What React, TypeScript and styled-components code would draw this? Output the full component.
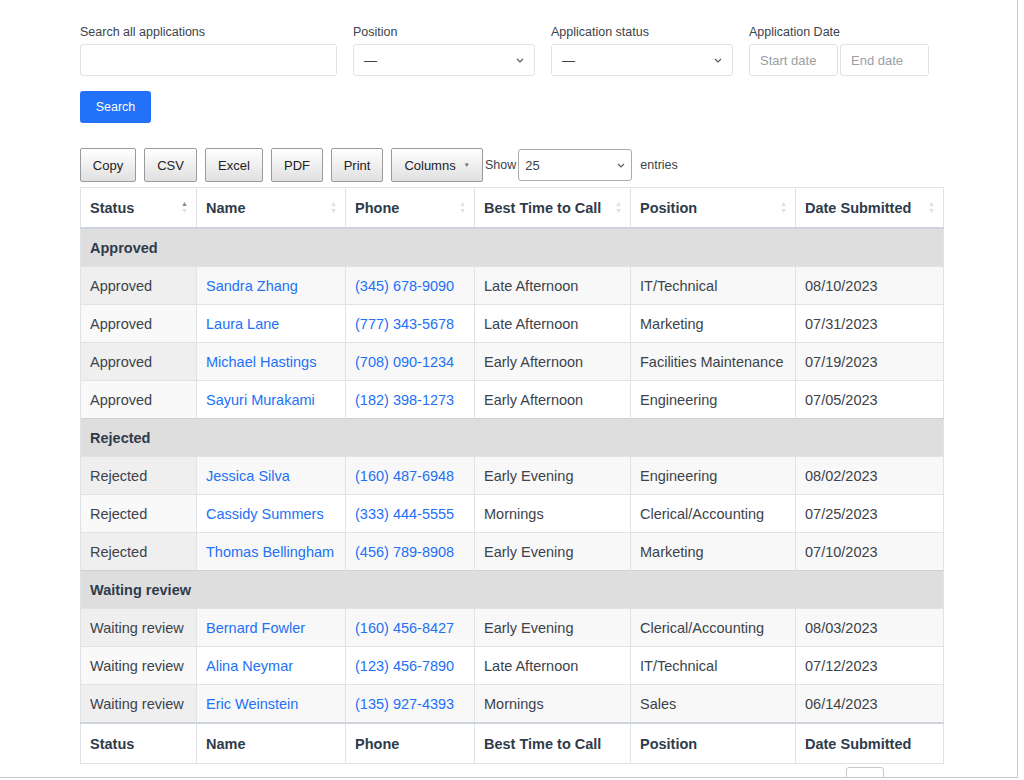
import { Fragment } from 'react';
import styled, { createGlobalStyle } from 'styled-components';

const Global = createGlobalStyle`
  body { margin: 0; background: #fff; font-family: "Liberation Sans", Arial, sans-serif; color: #3c434a; }
`;

const Frame = styled.div`
  width: 1018px;
  height: 778px;
  border-right: 1px solid #c9c9c9;
  border-bottom: 1px solid #c9c9c9;
  overflow: hidden;
  padding: 25px 0 0 80px;
  box-sizing: border-box;
  position: relative;
`;

const Filters = styled.div`
  display: flex;
  align-items: flex-end;
`;

const Field = styled.div<{ $w: number; $gap: number }>`
  width: ${(p) => p.$w}px;
  margin-right: ${(p) => p.$gap}px;
  display: flex;
  flex-direction: column;
`;

const Label = styled.label`
  font-size: 12.5px;
  color: #3c434a;
  margin-bottom: 5px;
`;

const Input = styled.div<{ $w?: number }>`
  height: 32px;
  ${(p) => (p.$w ? `width: ${p.$w}px;` : '')}
  border: 1px solid #dfe3e8;
  border-radius: 3px;
  box-sizing: border-box;
  display: flex;
  align-items: center;
  justify-content: space-between;
  padding: 0 10px;
  font-size: 13px;
  color: #3c434a;
`;

const Placeholder = styled.span`
  color: #9aa0a6;
`;

const DateRow = styled.div`
  display: flex;
  gap: 2px;
`;

const PrimaryBtn = styled.button`
  margin-top: 15px;
  width: 71px;
  height: 32px;
  background: #2271f6;
  border: none;
  border-radius: 3px;
  color: #fff;
  font: 12.5px "Liberation Sans", Arial, sans-serif;
`;

const Toolbar = styled.div`
  display: flex;
  align-items: center;
  gap: 8px;
  margin-top: 25px;
  font-size: 12.5px;
`;

const TbBtn = styled.button<{ $w: number }>`
  width: ${(p) => p.$w}px;
  height: 34px;
  border: 1px solid #9a9a9a;
  border-radius: 2px;
  background: linear-gradient(#fff, #e0e0e0);
  font: 13px "Liberation Sans", Arial, sans-serif;
  color: #222;
  display: flex;
  align-items: center;
  justify-content: center;
  gap: 8px;
`;

const Caret = styled.span`
  font-size: 6px;
  color: #666;
`;

const Select = styled.div`
  width: 114px;
  height: 32px;
  border: 1px solid #aaa;
  border-radius: 3px;
  box-sizing: border-box;
  display: flex;
  align-items: center;
  justify-content: space-between;
  padding: 0 6px;
  font-size: 13px;
  margin-left: -6px;
`;

const Table = styled.table`
  border-collapse: collapse;
  table-layout: fixed;
  margin-top: 5px;
  width: 864px;
  font-size: 14.5px;
  border: 1px solid #dfe3e8;
`;

const Th = styled.th<{ $w: number; $top?: boolean }>`
  width: ${(p) => p.$w}px;
  height: 39px;
  text-align: left;
  padding: 0 9px;
  font-weight: 700;
  color: #2f3b4a;
  white-space: nowrap;
  border-left: 1px solid #dfe3e8;
  border-bottom: ${(p) => (p.$top ? '2px solid #cfd4da' : 'none')};
  border-top: ${(p) => (p.$top ? 'none' : '2px solid #cfd4da')};
  position: relative;
`;

const Sort = styled.span<{ $active?: boolean }>`
  position: absolute;
  right: 8px;
  top: 13px;
  display: flex;
  flex-direction: column;
  gap: 1px;
  font-size: 7px;
  line-height: 6px;
  color: #dde1e5;
  & > span:first-child { color: ${(p) => (p.$active ? '#7d8794' : '#dde1e5')}; }
`;

const GroupRow = styled.tr`
  background: #dedede;
  td { height: 37px; padding: 0 9px; font-weight: 700; color: #2f3b4a; border-top: 1px solid #d0d0d0; }
`;

const Row = styled.tr<{ $odd: boolean }>`
  background: ${(p) => (p.$odd ? '#f8f8f8' : '#fff')};
`;

const Td = styled.td<{ $sorted?: boolean; $odd?: boolean }>`
  height: 37px;
  padding: 0 9px;
  border-left: 1px solid #dfe3e8;
  border-top: 1px solid #dfe3e8;
  white-space: nowrap;
  overflow: hidden;
  background: ${(p) => (p.$sorted ? (p.$odd ? '#efefef' : '#f9f9f9') : 'transparent')};
`;

const Link = styled.a`
  color: #2271f6;
  text-decoration: none;
`;

const PageBtn = styled.div`
  position: absolute;
  left: 846px;
  top: 767px;
  width: 36px;
  height: 20px;
  border: 1px solid #c8c8c8;
  border-radius: 3px;
  background: #fff;
`;

const Chevron = () => (
  <svg width="8" height="5" viewBox="0 0 8 5"><path d="M1 1l3 3 3-3" fill="none" stroke="#555" strokeWidth="1.1" /></svg>
);

const cols: [string, number][] = [
  ['Status', 116], ['Name', 149], ['Phone', 129], ['Best Time to Call', 156], ['Position', 165], ['Date Submitted', 148],
];

const groups: [string, string[][]][] = [
  ['Approved', [
    ['Sandra Zhang', '(345) 678-9090', 'Late Afternoon', 'IT/Technical', '08/10/2023'],
    ['Laura Lane', '(777) 343-5678', 'Late Afternoon', 'Marketing', '07/31/2023'],
    ['Michael Hastings', '(708) 090-1234', 'Early Afternoon', 'Facilities Maintenance', '07/19/2023'],
    ['Sayuri Murakami', '(182) 398-1273', 'Early Afternoon', 'Engineering', '07/05/2023'],
  ]],
  ['Rejected', [
    ['Jessica Silva', '(160) 487-6948', 'Early Evening', 'Engineering', '08/02/2023'],
    ['Cassidy Summers', '(333) 444-5555', 'Mornings', 'Clerical/Accounting', '07/25/2023'],
    ['Thomas Bellingham', '(456) 789-8908', 'Early Evening', 'Marketing', '07/10/2023'],
  ]],
  ['Waiting review', [
    ['Bernard Fowler', '(160) 456-8427', 'Early Evening', 'Clerical/Accounting', '08/03/2023'],
    ['Alina Neymar', '(123) 456-7890', 'Late Afternoon', 'IT/Technical', '07/12/2023'],
    ['Eric Weinstein', '(135) 927-4393', 'Mornings', 'Sales', '06/14/2023'],
  ]],
];

export default function App() {
  return (
    <Frame>
      <Global />
      <Filters>
        <Field $w={257} $gap={16}><Label>Search all applications</Label><Input /></Field>
        <Field $w={182} $gap={16}><Label>Position</Label><Input><span>—</span><Chevron /></Input></Field>
        <Field $w={182} $gap={16}><Label>Application status</Label><Input><span>—</span><Chevron /></Input></Field>
        <Field $w={180} $gap={0}>
          <Label>Application Date</Label>
          <DateRow>
            <Input $w={89}><Placeholder>Start date</Placeholder></Input>
            <Input $w={89}><Placeholder>End date</Placeholder></Input>
          </DateRow>
        </Field>
      </Filters>
      <PrimaryBtn>Search</PrimaryBtn>
      <Toolbar>
        <TbBtn $w={56}>Copy</TbBtn>
        <TbBtn $w={53}>CSV</TbBtn>
        <TbBtn $w={58}>Excel</TbBtn>
        <TbBtn $w={52}>PDF</TbBtn>
        <TbBtn $w={52}>Print</TbBtn>
        <TbBtn $w={92}>Columns <Caret>▼</Caret></TbBtn>
        <span style={{ marginLeft: -6 }}>Show</span>
        <Select><span>25</span><Chevron /></Select>
        <span>entries</span>
      </Toolbar>
      <Table>
        <colgroup>
          {cols.map(([c, w]) => <col key={c} style={{ width: w }} />)}
        </colgroup>
        <thead>
          <tr>
            {cols.map(([c, w], i) => (
              <Th key={c} $w={w} $top>{c}<Sort $active={i === 0}><span>▲</span><span>▼</span></Sort></Th>
            ))}
          </tr>
        </thead>
        <tbody>
          {groups.map(([g, rows]) => (
            <Fragment key={g}>
              <GroupRow><td colSpan={6}>{g}</td></GroupRow>
              {rows.map((r, i) => (
                <Row key={r[0]} $odd={i % 2 === 0}>
                  <Td $sorted $odd={i % 2 === 0}>{g}</Td>
                  <Td><Link>{r[0]}</Link></Td>
                  <Td><Link>{r[1]}</Link></Td>
                  <Td>{r[2]}</Td>
                  <Td>{r[3]}</Td>
                  <Td>{r[4]}</Td>
                </Row>
              ))}
            </Fragment>
          ))}
        </tbody>
        <tfoot>
          <tr>{cols.map(([c, w]) => <Th key={c} $w={w}>{c}</Th>)}</tr>
        </tfoot>
      </Table>
      <PageBtn />
    </Frame>
  );
}
